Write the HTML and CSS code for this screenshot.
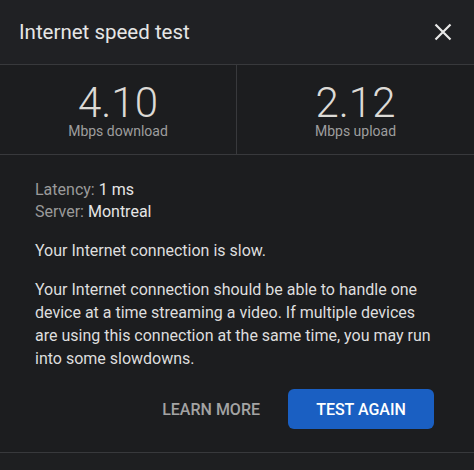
FILE: index.html
```html
<!DOCTYPE html>
<html lang="en">
<head>
    <meta charset="UTF-8">
    <meta name="viewport" content="width=device-width, initial-scale=1.0">
    <title>Internet speed test</title>
    <link rel="stylesheet" href="styles.css">
</head>
<body>

    <div class="dialog">
        <div class="dialog-header">
            <h1 class="dialog-title">Internet speed test</h1>
            <button class="close-btn" aria-label="Close">
                <svg width="18" height="18" viewBox="0 0 18 18">
                    <path d="M1.5 1.5 L16.5 16.5 M16.5 1.5 L1.5 16.5" stroke="#e8e8e8" stroke-width="2.2" fill="none"/>
                </svg>
            </button>
        </div>

        <div class="stats">
            <div class="stat">
                <div class="stat-value">4.10</div>
                <div class="stat-label">Mbps download</div>
            </div>
            <div class="stat">
                <div class="stat-value">2.12</div>
                <div class="stat-label">Mbps upload</div>
            </div>
        </div>

        <div class="dialog-body">
            <div class="info">
                <div><span class="info-key">Latency:</span> 1 ms</div>
                <div><span class="info-key">Server:</span> Montreal</div>
            </div>
            <p>Your Internet connection is slow.</p>
            <p>Your Internet connection should be able to handle one device at a time streaming a video. If multiple devices are using this connection at the same time, you may run into some slowdowns.</p>

            <div class="actions">
                <button class="btn btn-text">LEARN MORE</button>
                <button class="btn btn-primary">TEST AGAIN</button>
            </div>
        </div>

        <div class="dialog-footer"></div>
    </div>

</body>
</html>
```

FILE: styles.css
```css
body {
    margin: 0;
    font-family: Roboto, "Liberation Sans", sans-serif;
    background-color: #1c1d1f;
}

.dialog {
    width: 474px;
    height: 470px;
    background-color: #1c1d1f;
    display: flex;
    flex-direction: column;
    overflow: hidden;
}

/* --- header --- */
.dialog-header {
    height: 64px;
    flex: none;
    display: flex;
    align-items: center;
    justify-content: space-between;
    padding: 0 22px 0 19px;
    background-color: #202124;
    border-bottom: 1px solid #38393c;
}

.dialog-title {
    margin: 0;
    font-size: 20.5px;
    font-weight: 400;
    color: #e6e6e6;
}

.close-btn {
    background: none;
    border: none;
    padding: 0;
    width: 18px;
    height: 18px;
    display: flex;
    cursor: pointer;
}

/* --- stats row --- */
.stats {
    flex: none;
    display: grid;
    grid-template-columns: 237px 1fr;
    height: 89px;
    border-bottom: 1px solid #38393c;
}

.stat {
    text-align: center;
    padding-top: 18px;
}

.stat:first-child {
    border-right: 1px solid #38393c;
}

.stat-value {
    font-size: 42px;
    line-height: 40px;
    font-weight: 300;
    color: #dcdad6;
}

.stat-label {
    font-size: 14px;
    line-height: 16px;
    color: #9e9e9e;
}

/* --- body --- */
.dialog-body {
    flex: 1;
    padding: 24px 40px 0 35px;
    font-size: 16px;
    color: #dedede;
}

.info {
    line-height: 22px;
    color: #e6e6e6;
}

.info-key {
    color: #9a9a9a;
}

.dialog-body p {
    margin: 16px 0 0;
    line-height: 23px;
}

.actions {
    display: flex;
    justify-content: flex-end;
    align-items: center;
    gap: 12px;
    margin-top: 19px;
}

.btn {
    height: 40px;
    border: none;
    border-radius: 6px;
    font-family: inherit;
    font-size: 16px;
    font-weight: 500;
    cursor: pointer;
}

.btn-text {
    background: none;
    color: #a3a3a3;
    padding: 0 16px;
}

.btn-primary {
    width: 146px;
    background-color: #1a5fc2;
    color: #ffffff;
}

.dialog-footer {
    flex: none;
    height: 17px;
    border-top: 1px solid #38393c;
    background-color: #1e1f21;
}
```
